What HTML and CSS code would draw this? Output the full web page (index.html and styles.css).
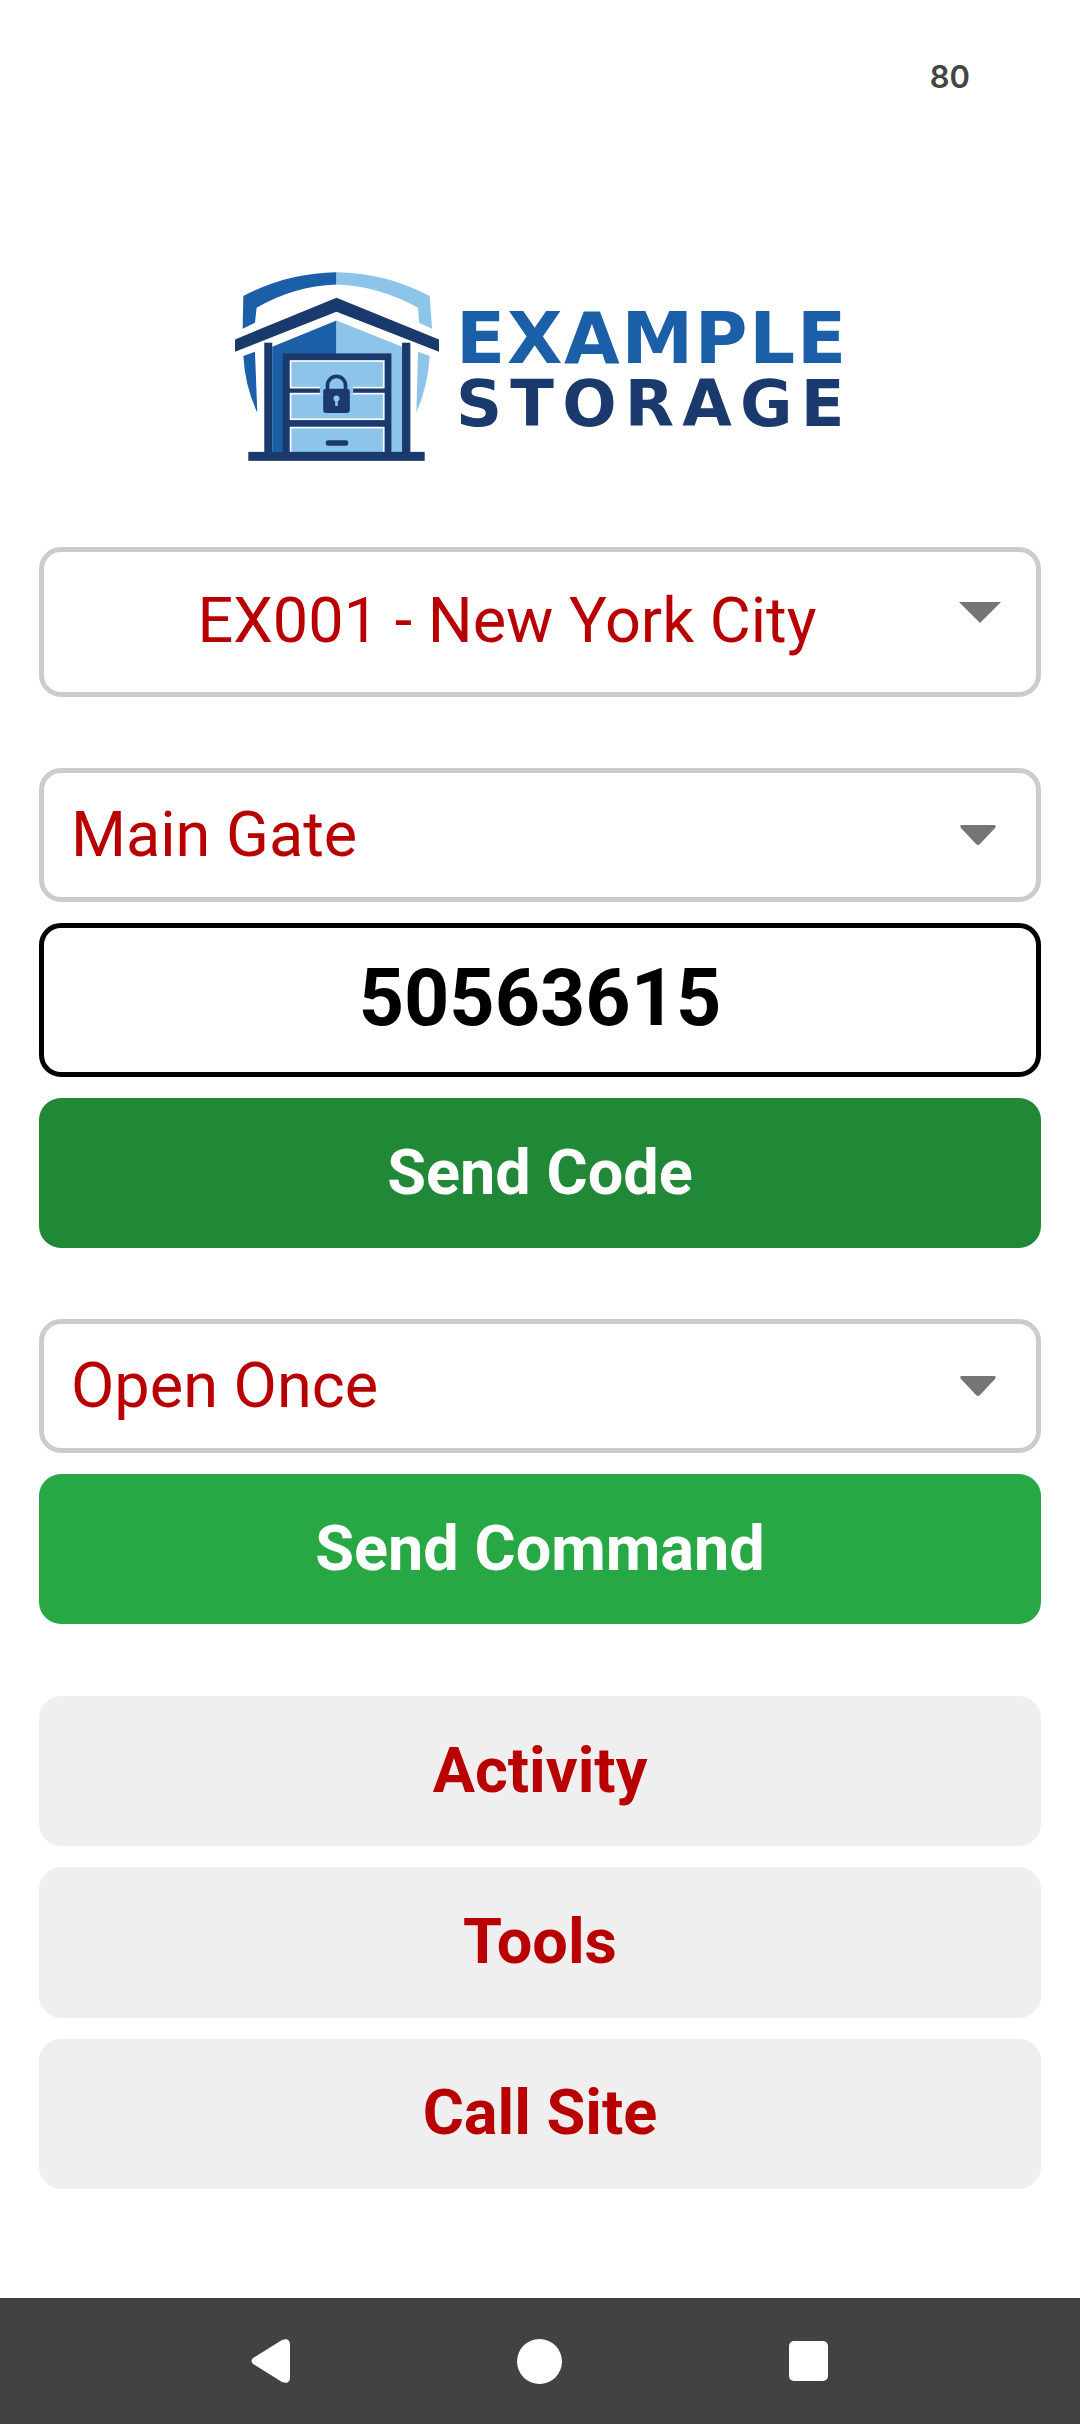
FILE: index.html
```html
<!DOCTYPE html>
<html lang="en">
<head>
    <meta charset="UTF-8">
    <meta name="viewport" content="width=device-width, initial-scale=1.0">
    <title>Example Storage</title>
    <link rel="stylesheet" href="styles.css">
</head>
<body>
    <div class="status-bar"><span class="status-num">80</span></div>

    <div class="logo">
        <svg class="logo-mark" viewBox="45 38 613 567" width="204" height="189">
            <!-- shield -->
            <path d="M70 110 Q200 40 350 38 L350 75 Q220 80 110 145 L105 190 L68 208 Z" fill="#1b5fa8"/>
            <path d="M630 110 Q500 40 350 38 L350 75 Q480 80 595 145 L598 190 L637 208 Z" fill="#8cc4ea"/>
            <path d="M70 290 L105 277 L112 460 Q75 380 70 290 Z" fill="#1b5fa8"/>
            <path d="M630 290 L595 277 L590 460 Q625 380 630 290 Z" fill="#8cc4ea"/>
            <!-- house -->
            <path d="M157 262 L350 183 L350 580 L157 580 Z" fill="#1b5fa8"/>
            <path d="M547 262 L350 183 L350 580 L547 580 Z" fill="#8cc4ea"/>
            <path d="M45 240 L350 115 L658 240 L658 277 L350 157 L45 277 Z" fill="#1a3a6e"/>
            <rect x="133" y="250" width="24" height="330" fill="#1a3a6e"/>
            <rect x="547" y="250" width="25" height="330" fill="#1a3a6e"/>
            <!-- door -->
            <rect x="188" y="282" width="327" height="298" fill="#1a3a6e"/>
            <rect x="212" y="305" width="280" height="80" fill="#8cc4ea" stroke="#fff" stroke-width="5"/>
            <rect x="212" y="403" width="280" height="77" fill="#8cc4ea" stroke="#fff" stroke-width="5"/>
            <rect x="212" y="505" width="280" height="78" fill="#8cc4ea" stroke="#fff" stroke-width="5"/>
            <!-- lock -->
            <rect x="300" y="375" width="100" height="30" fill="#8cc4ea"/>
            <path d="M323 392 V378 A27 27 0 0 1 377 378 V392" fill="none" stroke="#1a3a6e" stroke-width="11"/>
            <rect x="310" y="388" width="80" height="73" rx="9" fill="#1a3a6e"/>
            <circle cx="350" cy="418" r="9" fill="#8cc4ea"/>
            <rect x="346" y="420" width="8" height="20" fill="#8cc4ea"/>
            <rect x="318" y="543" width="67" height="17" rx="6" fill="#1a3a6e"/>
            <rect x="85" y="578" width="530" height="27" fill="#1a3a6e"/>
        </svg>
        <div class="logo-text">
            <div class="logo-top">EXAMPLE</div>
            <div class="logo-bottom">STORAGE</div>
        </div>
    </div>

    <div class="content">
        <div class="group">
            <div class="select select-site">
                <span class="select-label">EX001 - New York City</span>
                <svg class="arrow arrow-sharp" viewBox="0 0 42 21" width="42" height="21"><path d="M0 0H42L21 21Z" fill="#757575"/></svg>
            </div>
        </div>

        <div class="group">
            <div class="select">
                <span class="select-label">Main Gate</span>
                <svg class="arrow" viewBox="0 0 38 21" width="38" height="21"><path d="M3 0H35Q38 0 36 3L21 19Q19 21 17 19L2 3Q0 0 3 0Z" fill="#757575"/></svg>
            </div>
            <div class="code-box">50563615</div>
            <div class="btn btn-dark">Send Code</div>
        </div>

        <div class="group">
            <div class="select">
                <span class="select-label">Open Once</span>
                <svg class="arrow" viewBox="0 0 38 21" width="38" height="21"><path d="M3 0H35Q38 0 36 3L21 19Q19 21 17 19L2 3Q0 0 3 0Z" fill="#757575"/></svg>
            </div>
            <div class="btn btn-green">Send Command</div>
        </div>

        <div class="group group-links">
            <div class="btn btn-grey">Activity</div>
            <div class="btn btn-grey">Tools</div>
            <div class="btn btn-grey">Call Site</div>
        </div>
    </div>

    <div class="nav-bar">
        <svg viewBox="0 0 39 44" width="39" height="44"><path d="M2 19 L31 1 Q39 -2 39 6 V38 Q39 46 31 43 L2 25 Q-1 22 2 19 Z" fill="#fff"/></svg>
        <svg viewBox="0 0 45 45" width="45" height="45"><circle cx="22.5" cy="22.5" r="22.5" fill="#fff"/></svg>
        <svg viewBox="0 0 39 40" width="39" height="40"><rect width="39" height="40" rx="5" fill="#fff"/></svg>
    </div>
</body>
</html>
```

FILE: styles.css
```css
* {
    box-sizing: border-box;
}

body {
    margin: 0;
    padding: 0;
    width: 1080px;
    height: 2424px;
    background-color: #fff;
    font-family: 'Roboto', sans-serif;
    display: flex;
    flex-direction: column;
}

.status-bar {
    height: 272px;
    padding: 59px 110px 0 0;
    text-align: right;
}

.status-num {
    font-family: 'Inter', sans-serif;
    font-size: 31px;
    font-weight: 600;
    line-height: 36px;
    color: #444;
}

.logo {
    display: flex;
    gap: 17px;
    height: 275px;
    padding-left: 235px;
}

.logo-mark {
    flex-shrink: 0;
}

.logo-text {
    padding-top: 33px;
    font-family: 'DejaVu Sans', sans-serif;
    font-weight: 700;
    white-space: nowrap;
}

.logo-top {
    font-size: 72px;
    line-height: 66px;
    letter-spacing: 1.7px;
    color: #1b5fa8;
}

.logo-bottom {
    font-size: 64px;
    line-height: 66px;
    letter-spacing: 8.2px;
    color: #1a3a6e;
}

.content {
    flex: 1;
    padding: 0 39px;
    display: flex;
    flex-direction: column;
    gap: 71px;
}

.group {
    display: flex;
    flex-direction: column;
    gap: 21px;
}

.group-links {
    margin-top: 1px;
}

.select {
    height: 134px;
    border: 5px solid #ccc;
    border-radius: 22px;
    padding: 0 39px 0 27px;
    display: flex;
    align-items: center;
    color: #b80000;
    font-size: 63px;
}

.select-label {
    flex: 1;
    padding-bottom: 2px;
}

.select-site {
    height: 150px;
    padding-right: 35px;
}

.select-site .select-label {
    text-align: center;
    padding-right: 16px;
    padding-bottom: 4px;
}

.select-site .arrow {
    margin-bottom: 20px;
}

.code-box {
    height: 154px;
    border: 5px solid #000;
    border-radius: 22px;
    padding-bottom: 4px;
    display: flex;
    align-items: center;
    justify-content: center;
    font-size: 79px;
    font-weight: 700;
    color: #000;
}

.btn {
    height: 150px;
    border-radius: 22px;
    padding-bottom: 2px;
    display: flex;
    align-items: center;
    justify-content: center;
    font-size: 63px;
    font-weight: 700;
}

.btn-dark {
    background-color: #218838;
    color: #fff;
}

.btn-green {
    background-color: #28a745;
    color: #fff;
}

.btn-grey {
    height: 150.4px;
    background-color: #efefef;
    color: #b80000;
}

.nav-bar {
    height: 126px;
    padding-right: 1px;
    background-color: #424242;
    display: flex;
    align-items: center;
    justify-content: center;
    gap: 227px;
}
```
